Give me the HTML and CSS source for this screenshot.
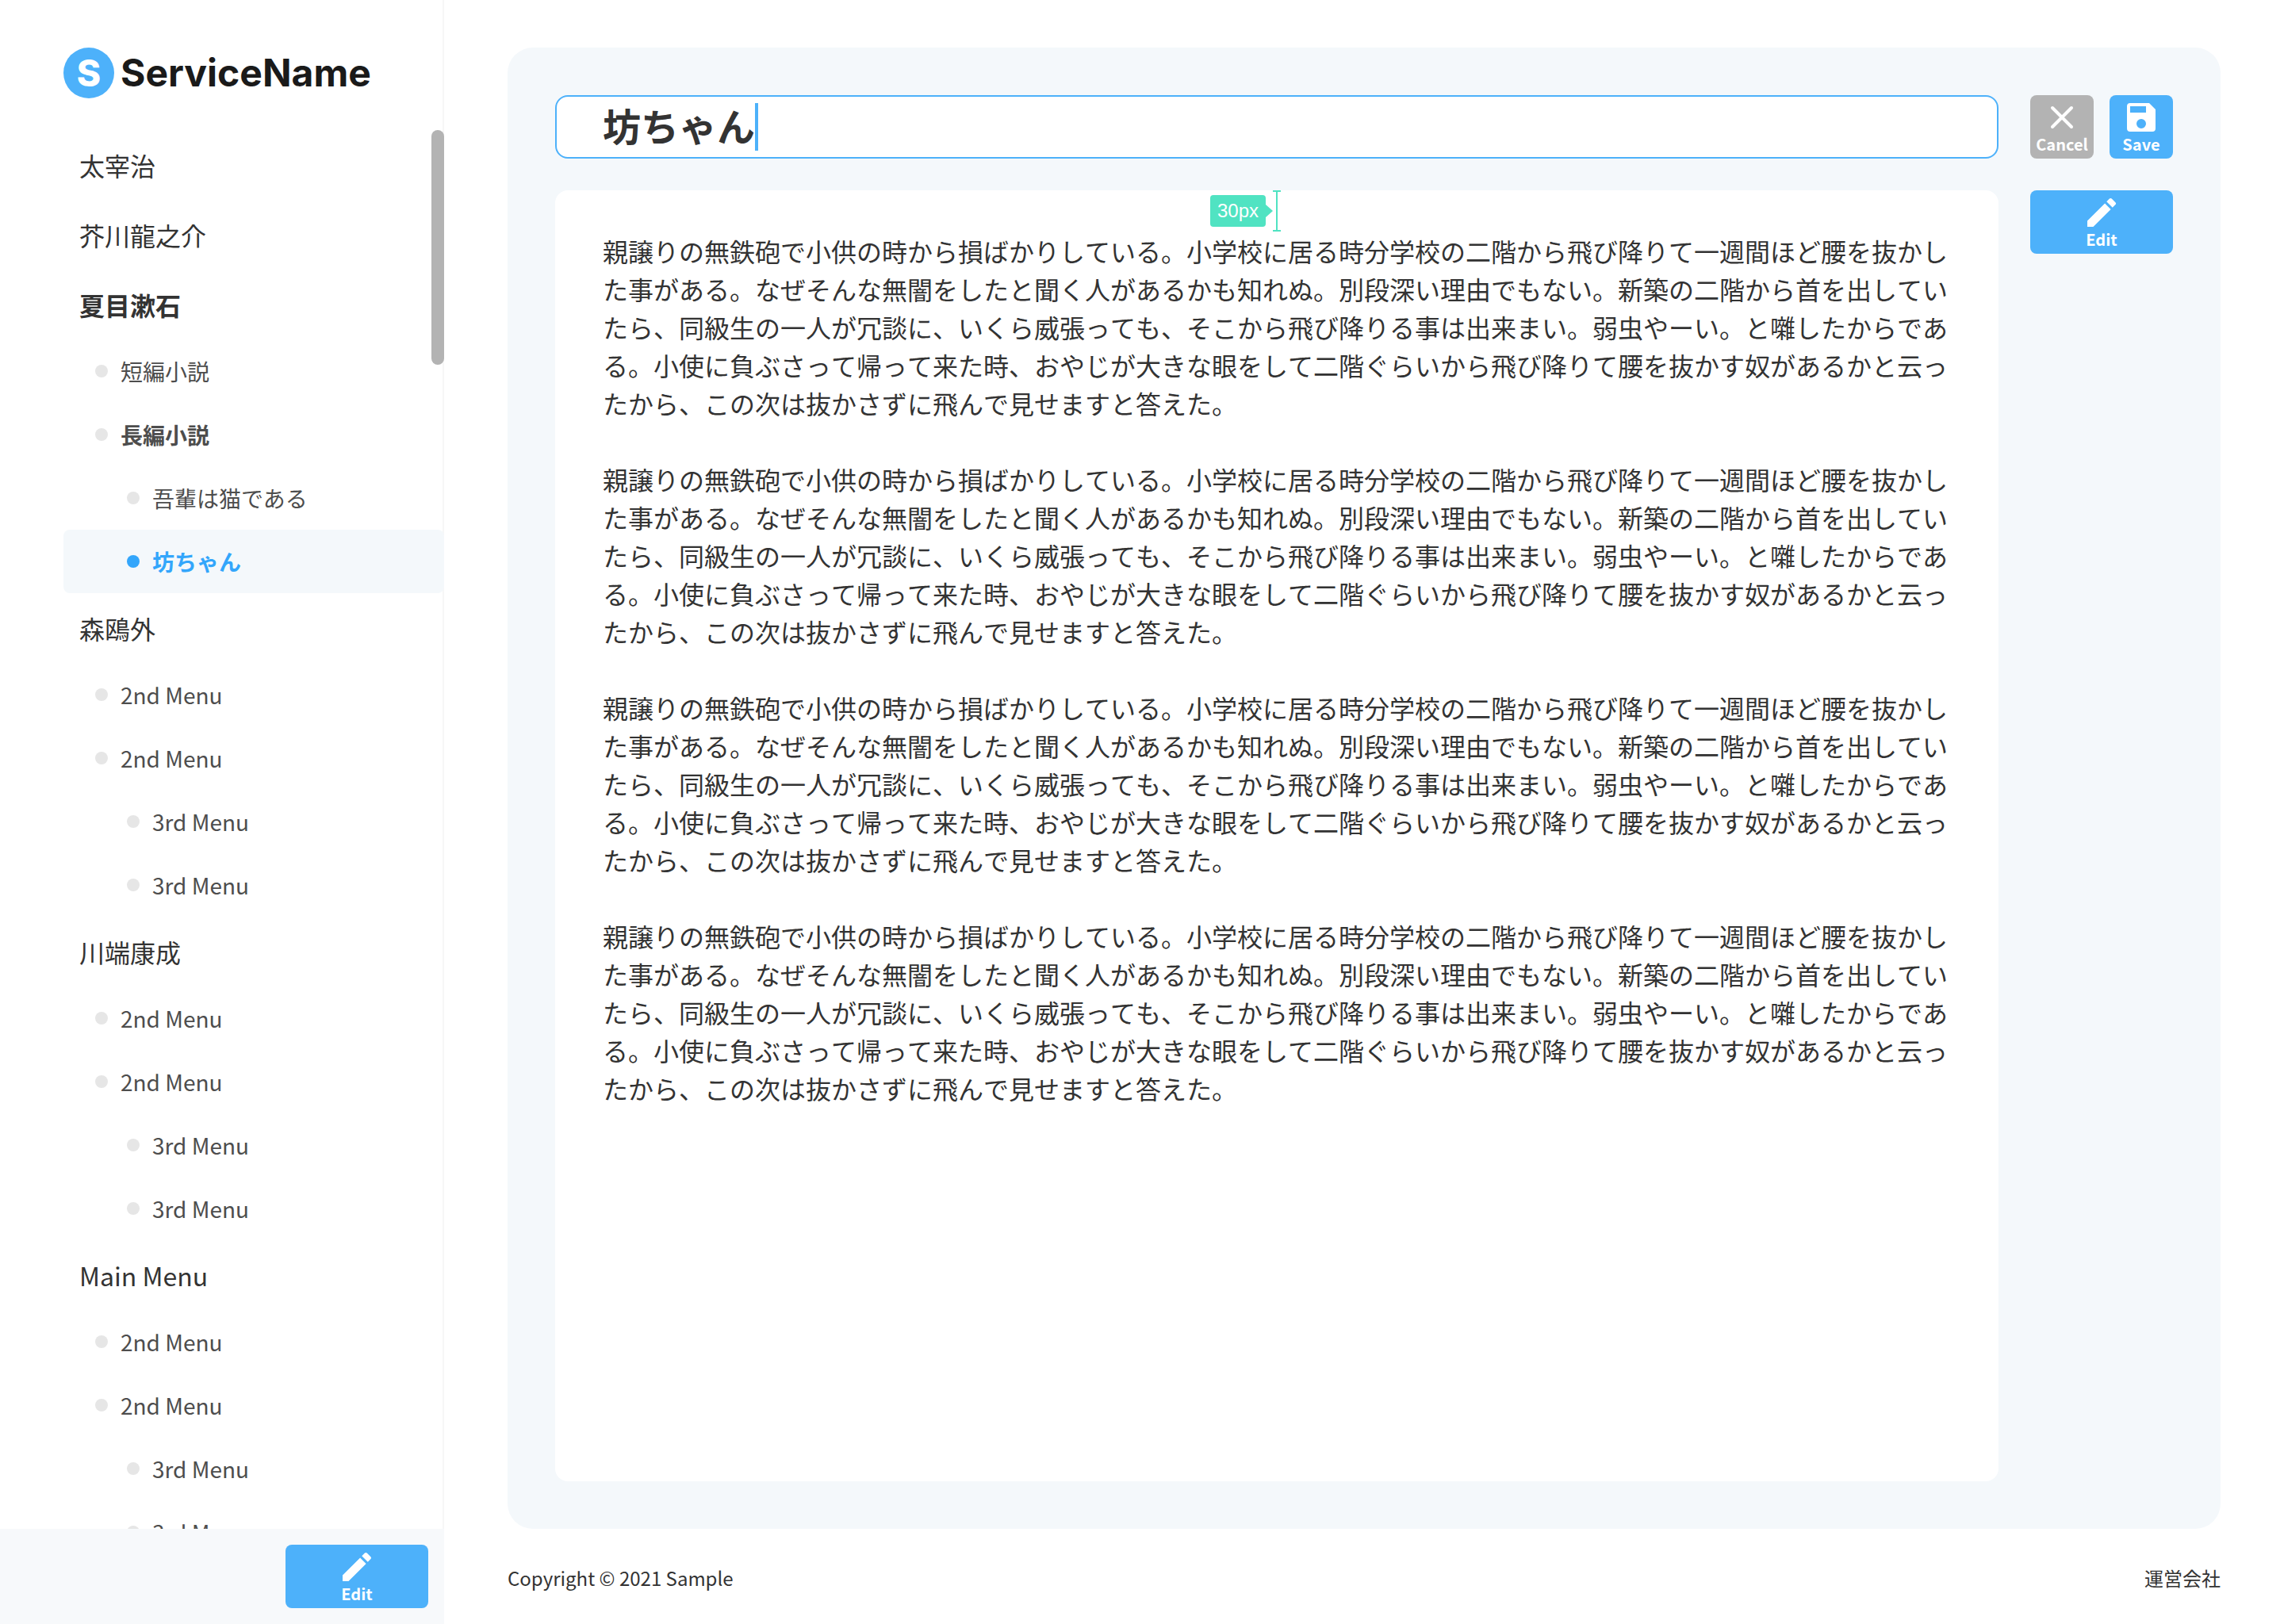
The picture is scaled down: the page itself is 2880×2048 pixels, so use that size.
FILE: index.html
```html
<!DOCTYPE html>
<html lang="ja">
<head>
<meta charset="utf-8">
<meta name="viewport" content="width=device-width, initial-scale=1">
<title>坊ちゃん | ServiceName</title>
<link rel="stylesheet" href="styles.css">
</head>
<body>
<svg class="sprite" aria-hidden="true">
  <symbol id="icon-edit" viewBox="0 0 24 24"><path d="M3 17.25V21h3.75L17.81 9.94l-3.75-3.75L3 17.25zM20.71 7.04a1 1 0 0 0 0-1.41l-2.34-2.34a1 1 0 0 0-1.41 0l-1.83 1.83 3.75 3.75 1.83-1.83z"/></symbol>
  <symbol id="icon-save" viewBox="0 0 24 24"><path d="M17 3H5a2 2 0 0 0-2 2v14a2 2 0 0 0 2 2h14a2 2 0 0 0 2-2V7l-4-4zm-5 16a3 3 0 1 1 0-6 3 3 0 0 1 0 6zm3-10H5V5h10v4z"/></symbol>
  <symbol id="icon-close" viewBox="0 0 24 24"><path d="M6 6l12 12M18 6L6 18" fill="none" stroke="currentColor" stroke-width="2" stroke-linecap="round"/></symbol>
</svg>
<div class="app">
  <aside class="sidebar">
    <a class="logo" href="#"><span class="logo-mark">S</span><span class="logo-name">ServiceName</span></a>
    <nav class="menu">
      <ul class="menu-list">
        <li><a class="item" href="#">太宰治</a></li>
        <li><a class="item" href="#">芥川龍之介</a></li>
        <li><a class="item open" href="#">夏目漱石</a></li>
        <li><a class="item second" href="#">短編小説</a></li>
        <li><a class="item second open" href="#">長編小説</a></li>
        <li><a class="item third" href="#">吾輩は猫である</a></li>
        <li><a class="item third current" href="#" aria-current="page">坊ちゃん</a></li>
        <li><a class="item" href="#">森鴎外</a></li>
        <li><a class="item second" href="#">2nd Menu</a></li>
        <li><a class="item second" href="#">2nd Menu</a></li>
        <li><a class="item third" href="#">3rd Menu</a></li>
        <li><a class="item third" href="#">3rd Menu</a></li>
        <li><a class="item" href="#">川端康成</a></li>
        <li><a class="item second" href="#">2nd Menu</a></li>
        <li><a class="item second" href="#">2nd Menu</a></li>
        <li><a class="item third" href="#">3rd Menu</a></li>
        <li><a class="item third" href="#">3rd Menu</a></li>
        <li><a class="item" href="#">Main Menu</a></li>
        <li><a class="item second" href="#">2nd Menu</a></li>
        <li><a class="item second" href="#">2nd Menu</a></li>
        <li><a class="item third" href="#">3rd Menu</a></li>
        <li><a class="item third" href="#">3rd Menu</a></li>
      </ul>
      <span class="scroll-thumb"></span>
    </nav>
    <div class="sidebar-foot">
      <button class="btn btn-wide" type="button"><svg class="icon" aria-hidden="true"><use href="#icon-edit"/></svg>Edit</button>
    </div>
  </aside>
  <div class="content">
    <main class="panel">
      <div class="title-field">
        <input class="title-input" type="text" value="坊ちゃん" aria-label="タイトル">
        <span class="caret"></span>
      </div>
      <div class="actions">
        <button class="btn btn-cancel" type="button"><svg class="icon" aria-hidden="true"><use href="#icon-close"/></svg>Cancel</button>
        <button class="btn" type="button"><svg class="icon" aria-hidden="true"><use href="#icon-save"/></svg>Save</button>
      </div>
      <article class="document">
        <p>親譲りの無鉄砲で小供の時から損ばかりしている。小学校に居る時分学校の二階から飛び降りて一週間ほど腰を抜かした事がある。なぜそんな無闇をしたと聞く人があるかも知れぬ。別段深い理由でもない。新築の二階から首を出していたら、同級生の一人が冗談に、いくら威張っても、そこから飛び降りる事は出来まい。弱虫やーい。と囃したからである。小使に負ぶさって帰って来た時、おやじが大きな眼をして二階ぐらいから飛び降りて腰を抜かす奴があるかと云ったから、この次は抜かさずに飛んで見せますと答えた。</p>
        <p>親譲りの無鉄砲で小供の時から損ばかりしている。小学校に居る時分学校の二階から飛び降りて一週間ほど腰を抜かした事がある。なぜそんな無闇をしたと聞く人があるかも知れぬ。別段深い理由でもない。新築の二階から首を出していたら、同級生の一人が冗談に、いくら威張っても、そこから飛び降りる事は出来まい。弱虫やーい。と囃したからである。小使に負ぶさって帰って来た時、おやじが大きな眼をして二階ぐらいから飛び降りて腰を抜かす奴があるかと云ったから、この次は抜かさずに飛んで見せますと答えた。</p>
        <p>親譲りの無鉄砲で小供の時から損ばかりしている。小学校に居る時分学校の二階から飛び降りて一週間ほど腰を抜かした事がある。なぜそんな無闇をしたと聞く人があるかも知れぬ。別段深い理由でもない。新築の二階から首を出していたら、同級生の一人が冗談に、いくら威張っても、そこから飛び降りる事は出来まい。弱虫やーい。と囃したからである。小使に負ぶさって帰って来た時、おやじが大きな眼をして二階ぐらいから飛び降りて腰を抜かす奴があるかと云ったから、この次は抜かさずに飛んで見せますと答えた。</p>
        <p>親譲りの無鉄砲で小供の時から損ばかりしている。小学校に居る時分学校の二階から飛び降りて一週間ほど腰を抜かした事がある。なぜそんな無闇をしたと聞く人があるかも知れぬ。別段深い理由でもない。新築の二階から首を出していたら、同級生の一人が冗談に、いくら威張っても、そこから飛び降りる事は出来まい。弱虫やーい。と囃したからである。小使に負ぶさって帰って来た時、おやじが大きな眼をして二階ぐらいから飛び降りて腰を抜かす奴があるかと云ったから、この次は抜かさずに飛んで見せますと答えた。</p>
        <div class="measure">
          <span class="measure-label">30px</span>
          <svg class="measure-line" viewBox="0 0 20 52" aria-hidden="true"><path d="M0 18l9 8-9 8zM9 0h10v2h-4v48h4v2H9v-2h4V2H9z"/></svg>
        </div>
      </article>
      <div class="side-actions">
        <button class="btn btn-wide" type="button"><svg class="icon" aria-hidden="true"><use href="#icon-edit"/></svg>Edit</button>
      </div>
    </main>
    <footer class="footer">
      <small class="copyright">Copyright © 2021 Sample</small>
      <a class="footer-link" href="#">運営会社</a>
    </footer>
  </div>
</div>
</body>
</html>
```
FILE: styles.css
```css
:root {
  --blue: #4db1fa;
  --blue-strong: #33a6fb;
  --grey: #b3b3b3;
  --tint: #f4f8fb;
  --text: #333;
}

* { box-sizing: border-box; }

body {
  margin: 0;
  background: #fff;
  color: var(--text);
  font-family: "Noto Sans CJK JP", sans-serif;
  font-size: 32px;
  line-height: 48px;
}

a { color: inherit; text-decoration: none; }

.sprite { display: none; }

.app {
  display: grid;
  grid-template-columns: 560px minmax(0, 1fr);
  height: 100vh;
}

/* Sidebar */
.sidebar {
  display: flex;
  flex-direction: column;
  min-height: 0;
  box-shadow: inset -2px 0 #f7f7f7;
}

.logo {
  display: flex;
  align-items: center;
  gap: 8px;
  padding: 60px 0 40px 80px;
  color: #1a1a1a;
  font-family: Inter, sans-serif;
  font-weight: 700;
  font-size: 48px;
  line-height: 64px;
}

.logo-mark {
  width: 64px;
  height: 64px;
  border-radius: 50%;
  background: var(--blue);
  color: #fff;
  font-weight: 800;
  font-size: 46px;
  text-align: center;
}

.menu {
  position: relative;
  flex: 1;
  min-height: 0;
  overflow: hidden;
}

.menu-list {
  margin: 0;
  padding: 0 0 0 80px;
  list-style: none;
}

.item {
  display: flex;
  align-items: center;
  height: 88px;
  padding-left: 20px;
  border-radius: 8px;
}

.second,
.third {
  gap: 16px;
  height: 80px;
  padding-left: 40px;
  color: #4d4d4d;
  font-size: 28px;
}

.third { padding-left: 80px; }

.second::before,
.third::before {
  content: "";
  width: 16px;
  height: 16px;
  border-radius: 50%;
  background: #e6e6e6;
}

.open { font-weight: 700; }

.current {
  background: var(--tint);
  color: var(--blue-strong);
  font-weight: 700;
}

.current::before { background: currentColor; }

.scroll-thumb {
  position: absolute;
  top: 0;
  right: 0;
  width: 16px;
  height: 296px;
  border-radius: 8px;
  background: var(--grey);
}

.sidebar-foot {
  display: flex;
  justify-content: flex-end;
  padding: 20px;
  background: #f7f9fb;
}

/* Buttons */
.btn {
  display: flex;
  flex-direction: column;
  align-items: center;
  width: 80px;
  height: 80px;
  padding: 4px 0 0;
  border: 0;
  border-radius: 8px;
  background: var(--blue);
  color: #fff;
  font: 700 20px/20px "Noto Sans CJK JP", sans-serif;
}

.btn-wide { width: 180px; }
.btn-cancel { background: var(--grey); }

.icon {
  width: 48px;
  height: 48px;
  fill: currentColor;
}

/* Main column */
.content {
  display: flex;
  flex-direction: column;
  padding: 60px 80px 0;
}

.panel {
  flex: 1;
  display: grid;
  grid-template: auto 1fr / minmax(0, 1fr) 180px;
  gap: 40px;
  padding: 60px;
  border-radius: 32px;
  background: var(--tint);
}

.title-field { position: relative; }

.title-input {
  display: block;
  width: 100%;
  height: 80px;
  padding: 0 58px 6px;
  border: 2px solid var(--blue);
  border-radius: 16px;
  outline: 0;
  background: #fff;
  color: var(--text);
  font: 700 48px/70px "Noto Sans CJK JP", sans-serif;
}

.caret {
  position: absolute;
  top: 10px;
  left: 252px;
  width: 4px;
  height: 60px;
  background: var(--blue);
}

.actions {
  display: flex;
  justify-content: space-between;
}

.document {
  position: relative;
  padding: 52px 60px;
  border-radius: 16px;
  background: #fff;
  font-kerning: none;
  text-spacing-trim: space-all;
}

.document p { margin: 0 0 48px; }

.measure {
  position: absolute;
  top: 0;
  right: calc(50% - 6px);
  display: flex;
  align-items: center;
  color: #50e3c2;
}

.measure-label {
  width: 70px;
  border-radius: 4px;
  background: currentColor;
  font: 24px/40px "Liberation Sans", sans-serif;
  text-align: center;
}

.measure-label::first-line { color: #fff; }

.measure-line {
  width: 20px;
  height: 52px;
  fill: currentColor;
}

.footer {
  display: flex;
  justify-content: space-between;
  align-items: center;
  height: 120px;
  padding-top: 4px;
  font-size: 24px;
}

.copyright { font-size: 24px; }
```
